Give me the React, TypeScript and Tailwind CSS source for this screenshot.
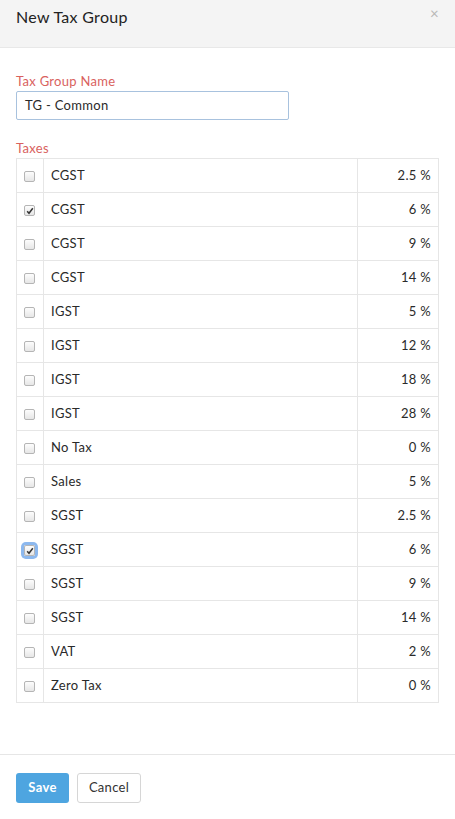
import React from 'react';

type Tax = { name: string; rate: string; checked?: boolean; focused?: boolean };

const taxes: Tax[] = [
  { name: 'CGST', rate: '2.5 %' },
  { name: 'CGST', rate: '6 %', checked: true },
  { name: 'CGST', rate: '9 %' },
  { name: 'CGST', rate: '14 %' },
  { name: 'IGST', rate: '5 %' },
  { name: 'IGST', rate: '12 %' },
  { name: 'IGST', rate: '18 %' },
  { name: 'IGST', rate: '28 %' },
  { name: 'No Tax', rate: '0 %' },
  { name: 'Sales', rate: '5 %' },
  { name: 'SGST', rate: '2.5 %' },
  { name: 'SGST', rate: '6 %', checked: true, focused: true },
  { name: 'SGST', rate: '9 %' },
  { name: 'SGST', rate: '14 %' },
  { name: 'VAT', rate: '2 %' },
  { name: 'Zero Tax', rate: '0 %' },
];

const Check = ({ checked, focused }: { checked?: boolean; focused?: boolean }) => (
  <span
    className={`flex h-[11px] w-[11px] items-center justify-center rounded-[2px] border border-[#b5b5b5] bg-gradient-to-b from-[#fdfdfd] to-[#e6e6e6] ${
      focused ? 'ring-[3px] ring-[#8cb8ee]' : ''
    }`}
  >
    {checked && (
      <svg width="8" height="8" viewBox="0 0 8 8">
        <path d="M1.2 4.2 L3 6.2 L6.8 1.2" fill="none" stroke="#333" strokeWidth="1.5" />
      </svg>
    )}
  </span>
);

export default function App() {
  return (
    <div
      className="flex h-[819px] w-[455px] flex-col bg-white text-[13px] tracking-[0.3px] text-[#2a2a2a]"
      style={{ fontFamily: 'Lato, "Open Sans", sans-serif' }}
    >
      <div className="flex h-[48px] items-start justify-between border-b border-[#e8e8e8] bg-[#f4f4f4] pl-4 pr-[16px] pt-[7px]">
        <h1 className="text-[16px] font-normal leading-[20px] text-[#222]">New Tax Group</h1>
        <span className="mt-[-4px] text-[15px] leading-[20px] text-[#b8b8b8]">×</span>
      </div>

      <div className="flex-1 px-4 pt-[24px]">
        <label className="block text-[13px] leading-[18px] text-[#d9625e]">Tax Group Name</label>
        <div className="mt-[1px] flex h-[29px] w-[273px] items-center rounded-[2px] border border-[#a8c2de] px-[8px] text-[13px]">
          TG - Common
        </div>

        <div className="mt-[19px] text-[13px] leading-[18px] text-[#d9625e]">Taxes</div>
        <table className="mt-[1px] w-[423px] border-collapse">
          <tbody>
            {taxes.map((t, i) => (
              <tr key={i} className="h-[34px]">
                <td className="w-[27px] border border-[#e6e6e6] pl-[7px] align-middle">
                  <div className="pt-[2px]">
                    <Check checked={t.checked} focused={t.focused} />
                  </div>
                </td>
                <td className="border border-[#e6e6e6] pl-[7px] align-middle">{t.name}</td>
                <td className="w-[81px] border border-[#e6e6e6] pr-[7px] text-right align-middle">{t.rate}</td>
              </tr>
            ))}
          </tbody>
        </table>
      </div>

      <div className="flex h-[65px] items-start gap-[8px] border-t border-[#e6e6e6] px-4 pt-[18px]">
        <button className="h-[30px] w-[53px] rounded-[3px] bg-[#4ea5e0] text-[13px] font-bold text-white">Save</button>
        <button className="h-[30px] w-[64px] rounded-[3px] border border-[#d6d6d6] bg-white text-[13px] text-[#333]">
          Cancel
        </button>
      </div>
    </div>
  );
}
